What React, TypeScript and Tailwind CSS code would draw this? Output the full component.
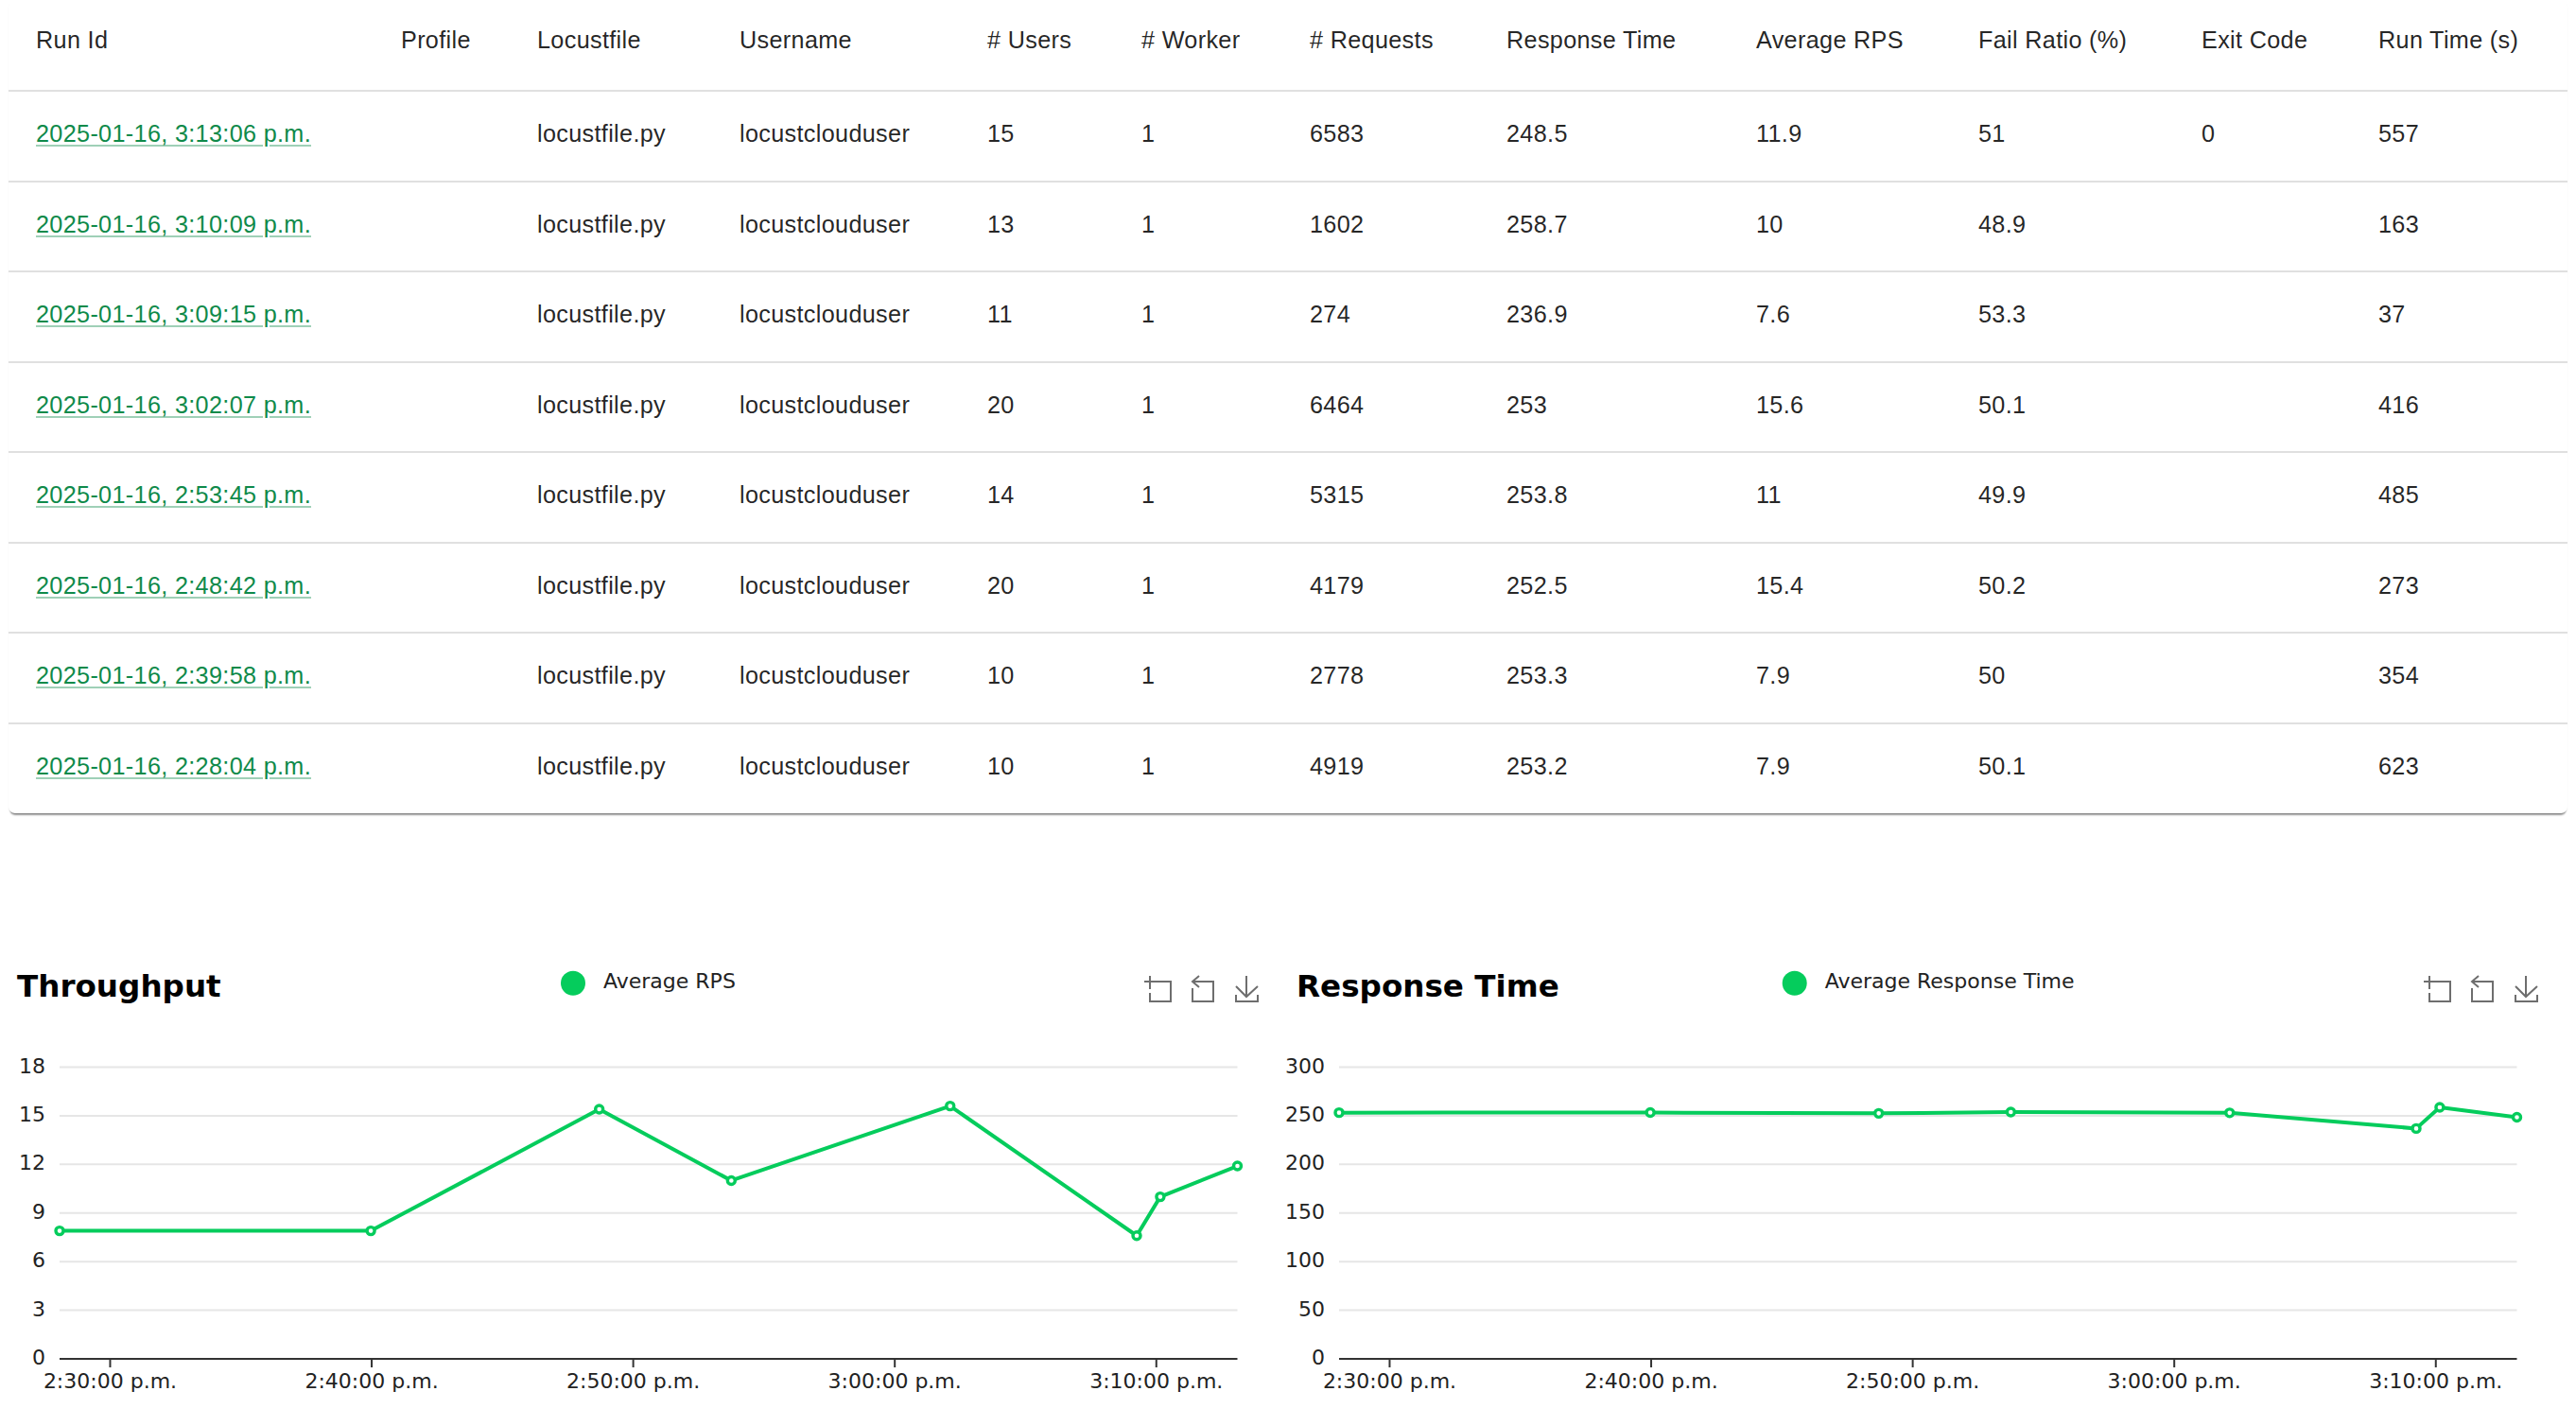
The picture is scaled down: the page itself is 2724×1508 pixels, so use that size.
const COLUMNS = [
  { label: "Run Id", width: 386 },
  { label: "Profile", width: 144 },
  { label: "Locustfile", width: 214 },
  { label: "Username", width: 262 },
  { label: "# Users", width: 163 },
  { label: "# Worker", width: 178 },
  { label: "# Requests", width: 208 },
  { label: "Response Time", width: 264 },
  { label: "Average RPS", width: 235 },
  { label: "Fail Ratio (%)", width: 236 },
  { label: "Exit Code", width: 187 },
  { label: "Run Time (s)", width: 229 },
];

const RUNS = [
  { id: "2025-01-16, 3:13:06 p.m.", users: 15, requests: 6583, rt: "248.5", rps: "11.9", fail: "51", exit: "0", time: 557 },
  { id: "2025-01-16, 3:10:09 p.m.", users: 13, requests: 1602, rt: "258.7", rps: "10", fail: "48.9", exit: "", time: 163 },
  { id: "2025-01-16, 3:09:15 p.m.", users: 11, requests: 274, rt: "236.9", rps: "7.6", fail: "53.3", exit: "", time: 37 },
  { id: "2025-01-16, 3:02:07 p.m.", users: 20, requests: 6464, rt: "253", rps: "15.6", fail: "50.1", exit: "", time: 416 },
  { id: "2025-01-16, 2:53:45 p.m.", users: 14, requests: 5315, rt: "253.8", rps: "11", fail: "49.9", exit: "", time: 485 },
  { id: "2025-01-16, 2:48:42 p.m.", users: 20, requests: 4179, rt: "252.5", rps: "15.4", fail: "50.2", exit: "", time: 273 },
  { id: "2025-01-16, 2:39:58 p.m.", users: 10, requests: 2778, rt: "253.3", rps: "7.9", fail: "50", exit: "", time: 354 },
  { id: "2025-01-16, 2:28:04 p.m.", users: 10, requests: 4919, rt: "253.2", rps: "7.9", fail: "50.1", exit: "", time: 623 },
];

// seconds since 2:28:04, oldest first
const TIMES = [0, 714, 1238, 1541, 2043, 2471, 2525, 2702];
const RPS = [7.9, 7.9, 15.4, 11, 15.6, 7.6, 10, 11.9];
const RESPONSE = [253.2, 253.3, 252.5, 253.8, 253, 236.9, 258.7, 248.5];
const TICKS = [
  { at: 116, label: "2:30:00 p.m." },
  { at: 716, label: "2:40:00 p.m." },
  { at: 1316, label: "2:50:00 p.m." },
  { at: 1916, label: "3:00:00 p.m." },
  { at: 2516, label: "3:10:00 p.m." },
];

// chart drawing area, in svg coordinates
const LEFT = 63;
const RIGHT = 1308.5;
const TOP = 161.5;
const BOTTOM = 470;

function HeadCell({ label }: { label: string }) {
  return <th className="pl-[29px] pb-[10px] text-left font-normal border-b-[2px] border-[#e0e0e0]">{label}</th>;
}

function Cell({ children, last }: { children?: React.ReactNode; last: boolean }) {
  return <td className={`pl-[29px] pb-[3px] ${last ? "" : "border-b-[2px] border-[#e0e0e0]"}`}>{children}</td>;
}

function RunsTable() {
  return (
    <div className="mx-[9px] rounded-[7px] bg-white shadow-[0_4px_2px_-2px_rgba(0,0,0,0.35),0_2px_2px_-1px_rgba(0,0,0,0.25)]">
      <table className="w-full table-fixed text-[25.2px] tracking-[0.34px] text-black/[0.87] font-['Liberation_Sans',sans-serif]">
        <colgroup>
          {COLUMNS.map((c) => (
            <col key={c.label} style={{ width: c.width }} />
          ))}
        </colgroup>
        <thead>
          <tr className="h-[96px]">
            {COLUMNS.map((c) => (
              <HeadCell key={c.label} label={c.label} />
            ))}
          </tr>
        </thead>
        <tbody>
          {RUNS.map((run, i) => {
            const last = i === RUNS.length - 1;
            return (
              <tr key={run.id} className="h-[95.5px]">
                <Cell last={last}>
                  <a href="#" className="text-[#0f8a4a] underline decoration-[#0f8a4a]/40 decoration-[2px] underline-offset-[3px]">
                    {run.id}
                  </a>
                </Cell>
                <Cell last={last} />
                <Cell last={last}>locustfile.py</Cell>
                <Cell last={last}>locustclouduser</Cell>
                <Cell last={last}>{run.users}</Cell>
                <Cell last={last}>1</Cell>
                <Cell last={last}>{run.requests}</Cell>
                <Cell last={last}>{run.rt}</Cell>
                <Cell last={last}>{run.rps}</Cell>
                <Cell last={last}>{run.fail}</Cell>
                <Cell last={last}>{run.exit}</Cell>
                <Cell last={last}>{run.time}</Cell>
              </tr>
            );
          })}
        </tbody>
      </table>
    </div>
  );
}

function Toolbox() {
  return (
    <g fill="none" stroke="#6e6e6e" strokeWidth="2">
      <path d="M1210 71h14M1216 65v14M1223 71h15v21h-22v-9" />
      <path d="M1261 78v14h22v-21h-22M1268 65l-7 6 7 6" />
      <path d="M1318 65v22M1307 76l11 11 12-11M1307 85v7h23v-7" />
    </g>
  );
}

function Chart({
  title,
  legend,
  legendX,
  values,
  max,
  yLabels,
}: {
  title: string;
  legend: string;
  legendX: number;
  values: number[];
  max: number;
  yLabels: number[];
}) {
  const pxPerSecond = (RIGHT - LEFT) / 2702;
  const px = (t: number) => LEFT + t * pxPerSecond;
  const py = (v: number) => BOTTOM - (v / max) * (BOTTOM - TOP);
  const points = values.map((v, i) => `${px(TIMES[i])},${py(v)}`).join(" ");

  return (
    <svg width="1353" height="540" viewBox="0 0 1353 540" className="block shrink-0 font-['DejaVu_Sans',sans-serif]">
      <text x="18" y="86.5" fontSize="32.6" fontWeight="700" fill="#000">
        {title}
      </text>
      <circle cx={legendX} cy="72.7" r="13" fill="#05cc5c" />
      <text x={legendX + 32} y="78" fontSize="22" fill="#222">
        {legend}
      </text>
      <Toolbox />

      {yLabels.map((v) => (
        <g key={v}>
          <text x={LEFT - 15} y={py(v) + 6} fontSize="22" textAnchor="end" fill="#222">
            {v}
          </text>
          {v > 0 && <line x1={LEFT} x2={RIGHT} y1={py(v)} y2={py(v)} stroke="#e6e6e6" strokeWidth="2" />}
        </g>
      ))}

      <line x1={LEFT} x2={RIGHT} y1={BOTTOM} y2={BOTTOM} stroke="#333" strokeWidth="2" />
      {TICKS.map((t) => (
        <g key={t.at}>
          <line x1={px(t.at)} x2={px(t.at)} y1={BOTTOM} y2={BOTTOM + 9} stroke="#333" strokeWidth="2" />
          <text x={px(t.at)} y={BOTTOM + 31} fontSize="22" textAnchor="middle" fill="#222">
            {t.label}
          </text>
        </g>
      ))}

      <polyline points={points} fill="none" stroke="#05cc5c" strokeWidth="4" strokeLinejoin="round" />
      {values.map((v, i) => (
        <circle key={i} cx={px(TIMES[i])} cy={py(v)} r="4" fill="#fff" stroke="#05cc5c" strokeWidth="3.4" />
      ))}
    </svg>
  );
}

export default function App() {
  return (
    <div className="h-[1508px] overflow-hidden bg-white">
      <RunsTable />
      <div className="mt-[107px] flex">
        <Chart title="Throughput" legend="Average RPS" legendX={606} values={RPS} max={18} yLabels={[0, 3, 6, 9, 12, 15, 18]} />
        <Chart
          title="Response Time"
          legend="Average Response Time"
          legendX={544.7}
          values={RESPONSE}
          max={300}
          yLabels={[0, 50, 100, 150, 200, 250, 300]}
        />
      </div>
    </div>
  );
}
